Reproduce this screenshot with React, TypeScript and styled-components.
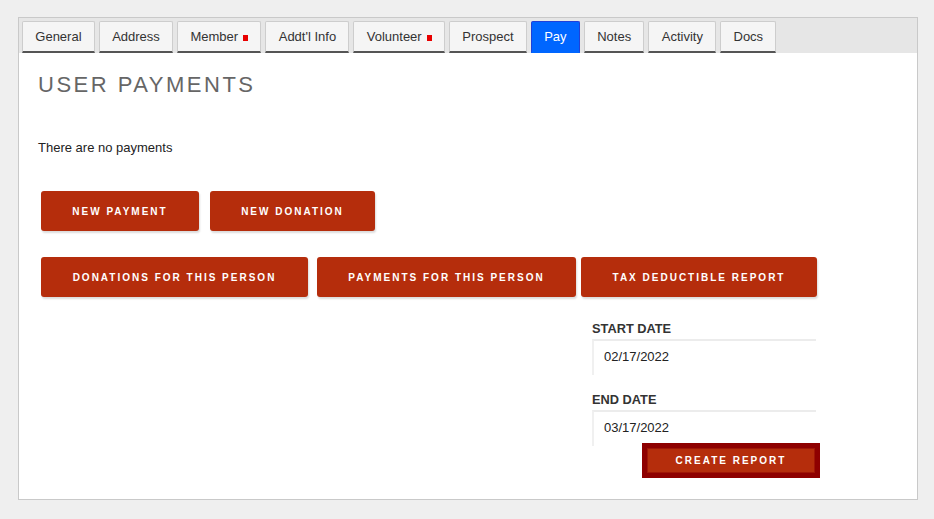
import React from "react";
import styled, { createGlobalStyle } from "styled-components";

const GlobalStyle = createGlobalStyle`
  html, body {
    margin: 0;
    padding: 0;
    background: #efefef;
  }
  body {
    font-family: "Liberation Sans", Arial, sans-serif;
    color: #222;
  }
`;

const Page = styled.div`
  padding: 17px 0 0 18px;
`;

const Panel = styled.div`
  width: 898px;
  height: 481px;
  border: 1px solid #c9c9c9;
  background: #fff;
  display: flex;
  flex-direction: column;
`;

const TabBar = styled.nav`
  display: flex;
  gap: 4px;
  padding: 3px 3px 0 3px;
  background: #e6e6e6;
  height: 35px;
  box-sizing: border-box;
`;

const Tab = styled.button<{ $active?: boolean }>`
  height: 32px;
  box-sizing: border-box;
  padding: 0 12.3px;
  display: flex;
  align-items: center;
  gap: 5px;
  font-family: "Liberation Sans", Arial, sans-serif;
  font-size: 13px;
  color: ${(p) => (p.$active ? "#fff" : "#333")};
  background: ${(p) => (p.$active ? "#0066ff" : "#f5f5f5")};
  border: 1px solid ${(p) => (p.$active ? "#2140d8" : "#cdcdcd")};
  border-bottom: 2px solid ${(p) => (p.$active ? "#0066ff" : "#555")};
  border-radius: 2px 2px 0 0;
  cursor: pointer;
`;

const Flag = styled.span`
  display: inline-block;
  width: 5px;
  height: 6px;
  margin-top: 2px;
  background: #e80000;
`;

const Body = styled.div`
  padding: 19px 0 0 19px;
  display: flex;
  flex-direction: column;
`;

const Title = styled.h1`
  margin: 0;
  font-size: 22px;
  line-height: 26px;
  font-weight: 400;
  letter-spacing: 2.5px;
  color: #666;
`;

const Empty = styled.p`
  margin: 42px 0 0 0;
  font-size: 13px;
  line-height: 16px;
  color: #222;
`;

const Actions = styled.div`
  margin: 35px 0 0 3px;
  width: 776px;
  display: flex;
  flex-direction: column;
  gap: 26px;
`;

const ButtonRow = styled.div`
  display: flex;
`;

const ActionButton = styled.button<{ $w: number; $after?: number }>`
  width: ${(p) => p.$w}px;
  margin-right: ${(p) => p.$after ?? 0}px;
  height: 40px;
  padding: 0;
  border: none;
  border-radius: 3px;
  background: #b52d0c;
  box-shadow: 1px 2px 2px rgba(0, 0, 0, 0.14);
  color: #fff;
  font-family: "Liberation Sans", Arial, sans-serif;
  font-size: 10px;
  font-weight: 700;
  letter-spacing: 2px;
  cursor: pointer;
`;

const DateBlock = styled.div`
  align-self: flex-end;
  width: 225px;
  margin-top: -2px;
  display: flex;
  flex-direction: column;
`;

const Label = styled.label<{ $top?: number }>`
  font-size: 12.8px;
  line-height: 15px;
  font-weight: 700;
  color: #333;
  margin-top: ${(p) => p.$top ?? 0}px;
`;

const DateInput = styled.input`
  margin-top: 3px;
  width: 224px;
  height: 36px;
  box-sizing: border-box;
  padding: 0 0 3px 10px;
  border: none;
  border-top: 2px solid #ececec;
  border-left: 2px solid #f0f0f0;
  background: #fff;
  font-family: "Liberation Sans", Arial, sans-serif;
  font-size: 13px;
  color: #222;
  outline: none;
`;

const ReportButton = styled.button`
  align-self: flex-end;
  margin: -3px -3px 0 0;
  width: 178px;
  height: 35px;
  box-sizing: border-box;
  padding: 0;
  border: 5px solid #8e0000;
  box-shadow: inset 0 0 0 1px #a01606;
  background: #b52d0c;
  color: #fff;
  font-family: "Liberation Sans", Arial, sans-serif;
  font-size: 10px;
  font-weight: 700;
  letter-spacing: 2px;
  cursor: pointer;
  position: relative;
`;

const tabs = [
  { label: "General" },
  { label: "Address" },
  { label: "Member", flag: true },
  { label: "Addt'l Info" },
  { label: "Volunteer", flag: true },
  { label: "Prospect" },
  { label: "Pay", active: true },
  { label: "Notes" },
  { label: "Activity" },
  { label: "Docs" },
];

export default function App() {
  return (
    <>
      <GlobalStyle />
      <Page>
        <Panel>
          <TabBar>
            {tabs.map((t) => (
              <Tab key={t.label} $active={t.active}>
                {t.label}
                {t.flag && <Flag />}
              </Tab>
            ))}
          </TabBar>
          <Body>
            <Title>USER PAYMENTS</Title>
            <Empty>There are no payments</Empty>
            <Actions>
              <ButtonRow>
                <ActionButton $w={158} $after={11}>NEW PAYMENT</ActionButton>
                <ActionButton $w={165}>NEW DONATION</ActionButton>
              </ButtonRow>
              <ButtonRow>
                <ActionButton $w={267} $after={9}>DONATIONS FOR THIS PERSON</ActionButton>
                <ActionButton $w={259} $after={5}>PAYMENTS FOR THIS PERSON</ActionButton>
                <ActionButton $w={236}>TAX DEDUCTIBLE REPORT</ActionButton>
              </ButtonRow>
              <DateBlock>
                <Label>START DATE</Label>
                <DateInput defaultValue="02/17/2022" />
                <Label $top={17}>END DATE</Label>
                <DateInput defaultValue="03/17/2022" />
                <ReportButton>CREATE REPORT</ReportButton>
              </DateBlock>
            </Actions>
          </Body>
        </Panel>
      </Page>
    </>
  );
}
